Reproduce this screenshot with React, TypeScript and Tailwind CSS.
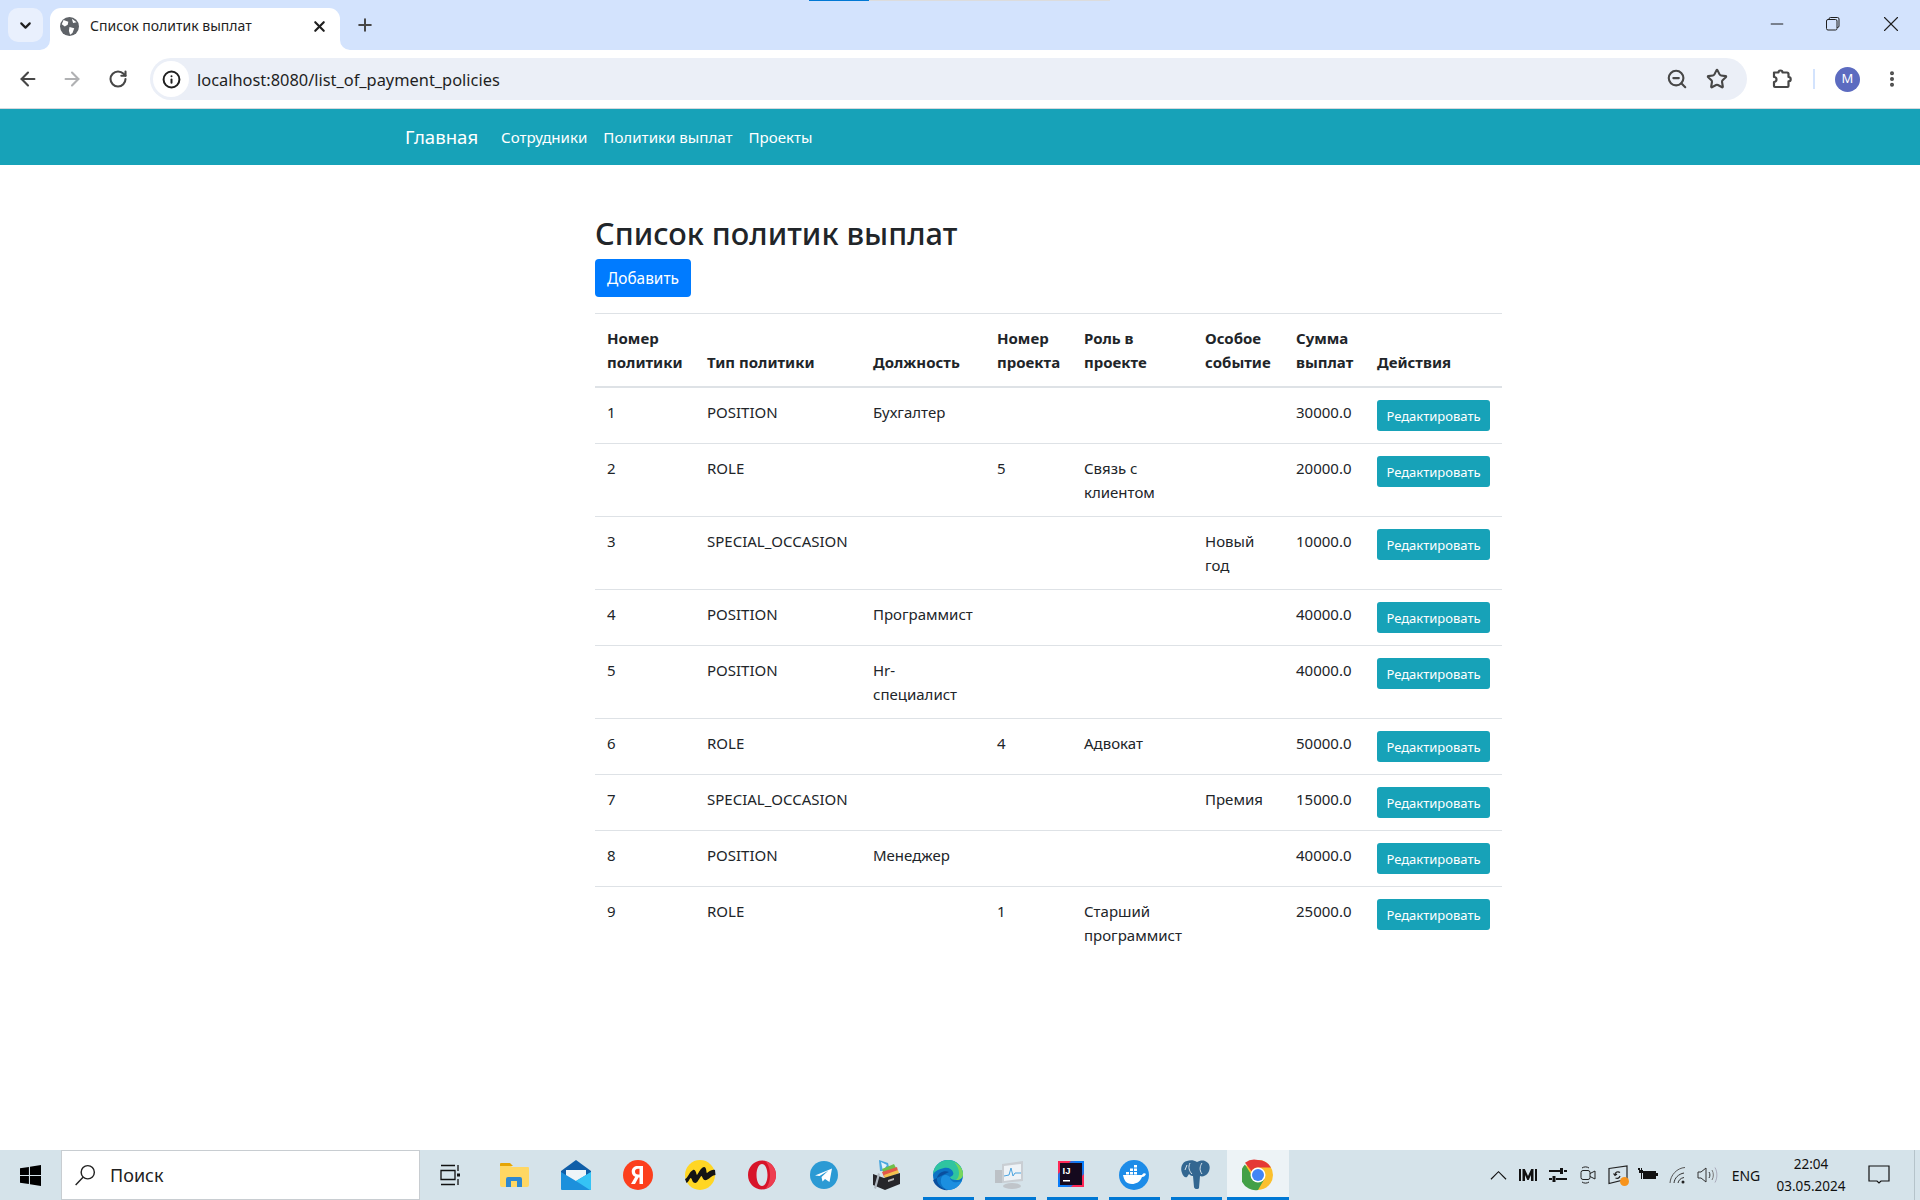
import React from 'react';
import { ArrowLeft, ArrowRight, RotateCw, X, Plus, ChevronDown, Info, ZoomOut, Star, EllipsisVertical, Minus } from 'lucide-react';

const policies = [
  { id: 1, type: 'POSITION', position: 'Бухгалтер', project: '', role: '', occasion: '', sum: '30000.0' },
  { id: 2, type: 'ROLE', position: '', project: '5', role: 'Связь с клиентом', occasion: '', sum: '20000.0' },
  { id: 3, type: 'SPECIAL_OCCASION', position: '', project: '', role: '', occasion: 'Новый год', sum: '10000.0' },
  { id: 4, type: 'POSITION', position: 'Программист', project: '', role: '', occasion: '', sum: '40000.0' },
  { id: 5, type: 'POSITION', position: 'Hr-специалист', project: '', role: '', occasion: '', sum: '40000.0' },
  { id: 6, type: 'ROLE', position: '', project: '4', role: 'Адвокат', occasion: '', sum: '50000.0' },
  { id: 7, type: 'SPECIAL_OCCASION', position: '', project: '', role: '', occasion: 'Премия', sum: '15000.0' },
  { id: 8, type: 'POSITION', position: 'Менеджер', project: '', role: '', occasion: '', sum: '40000.0' },
  { id: 9, type: 'ROLE', position: '', project: '1', role: 'Старший программист', occasion: '', sum: '25000.0' },
];

const headers = ['Номер политики', 'Тип политики', 'Должность', 'Номер проекта', 'Роль в проекте', 'Особое событие', 'Сумма выплат', 'Действия'];

function TabStrip() {
  return (
    <div className="relative flex h-[50px] shrink-0 bg-[#d3e3fd]">
      <div className="absolute left-[809px] top-0 h-px w-[60px] bg-[#0078d4]" />
      <div className="absolute left-[869px] top-0 h-px w-[241px] bg-[#dcdcdc]" />
      <div className="ml-2 mt-2 flex h-[34px] w-[35px] items-center justify-center rounded-[10px] bg-[#e9f0fd]">
        <ChevronDown className="h-[17px] w-[17px] text-[#1f1f1f]" strokeWidth={3} />
      </div>
      <div className="relative ml-[7px] mt-2 flex h-[42px] w-[290px] items-center rounded-t-[11px] bg-white pb-[6px] pl-[10px] pr-[12px]">
        <svg viewBox="0 0 10 10" className="absolute bottom-0 left-[-10px] h-[10px] w-[10px]"><path d="M10 0v10H0a10 10 0 0 0 10-10z" fill="#fff" /></svg>
        <svg viewBox="0 0 10 10" className="absolute bottom-0 right-[-10px] h-[10px] w-[10px]"><path d="M0 0v10h10A10 10 0 0 1 0 0z" fill="#fff" /></svg>
        <svg viewBox="0 0 16 16" className="h-[19px] w-[19px] shrink-0">
          <circle cx="8" cy="8" r="8" fill="#5f6368" />
          <path d="M3 2.500 L7 4 L6.500 6.500 L4 8 L1.500 6 Z M8 8.500 L12 9.500 L10.500 13.500 L8.500 15 L7.500 11.500 Z M10 1.500 L14 4.500 L11 5 Z" fill="#fff" />
        </svg>
        <span className="ml-[11px] flex-1 text-[14px] leading-none text-[#1f1f1f]">Список политик выплат</span>
        <X className="h-[17px] w-[17px] text-[#1f1f1f]" strokeWidth={3} />
      </div>
      <div className="ml-[15px] mt-[15px] h-5 w-5 text-[#474747]">
        <Plus className="h-5 w-5" strokeWidth={2.4} />
      </div>
      <div className="flex-1" />
      <div className="flex text-[#1f1f1f]">
        <div className="flex w-[56px] items-start justify-center pt-[14px]"><Minus className="h-[20px] w-[20px]" strokeWidth={1.2} /></div>
        <div className="flex w-[56px] items-start justify-center pt-[17px]">
          <svg viewBox="0 0 14 14" className="h-[14px] w-[14px]" fill="none" stroke="#1f1f1f" strokeWidth="1">
            <rect x="0.500" y="2.500" width="10.500" height="10.500" rx="1.500" />
            <path d="M3 2.500V2a1.500 1.500 0 0 1 1.500-1.500h7A1.500 1.500 0 0 1 13 2v7a1.500 1.500 0 0 1-1.500 1.500H11" />
          </svg>
        </div>
        <div className="flex w-[59px] items-start justify-center pt-[11px]"><X className="h-[26px] w-[26px]" strokeWidth={1} /></div>
      </div>
    </div>
  );
}

function Toolbar() {
  return (
    <div className="flex h-[59px] shrink-0 items-start rounded-t-[11px] border-b border-[#d5d8dd] bg-white pt-2 text-[#474747]">
      <div className="flex w-[150px] items-center pl-[17px] pt-[10px]">
        <ArrowLeft className="h-[22px] w-[22px]" strokeWidth={2.3} />
        <ArrowRight className="ml-[22px] h-[22px] w-[22px] text-[#b0b1b3]" strokeWidth={2.3} />
        <RotateCw className="ml-[25px] h-[20px] w-[20px]" strokeWidth={2.5} />
      </div>
      <div className="flex h-[42px] w-[1597px] items-center rounded-full bg-[#ebeff7] pl-[3px] pr-[19px]">
        <div className="flex h-[36px] w-[36px] items-center justify-center rounded-full bg-white">
          <Info className="h-[19px] w-[19px] text-[#1f1f1f]" strokeWidth={2.5} />
        </div>
        <span className="ml-[8px] flex-1 pt-[2px] text-[16.4px] leading-none text-[#1f1f1f]">localhost:8080/list_of_payment_policies</span>
        <ZoomOut className="h-[22px] w-[22px]" strokeWidth={2.3} />
        <Star className="ml-[18px] h-[22px] w-[22px]" strokeWidth={2.3} />
      </div>
      <div className="flex h-[42px] flex-1 items-center">
        <svg viewBox="0 0 20 20" className="ml-[25px] h-[20px] w-[20px]" fill="none" stroke="#474747" strokeWidth="2.200" strokeLinejoin="round">
          <path d="M2 3.500h4.500a2 2 0 0 1 4 0H15a1.500 1.500 0 0 1 1.500 1.500v3a2.200 2.200 0 0 1 0 4.400V17a1 1 0 0 1-1 1H3a1 1 0 0 1-1-1v-4a2.500 2.500 0 0 0 0-5z" />
        </svg>
        <div className="ml-[21px] h-[20px] w-[2px] bg-[#d3e3fd]" />
        <div className="ml-[20px] flex h-[25px] w-[25px] items-center justify-center rounded-full bg-[#5c6bc0] text-[13px] text-white">M</div>
        <EllipsisVertical className="ml-[22px] h-[20px] w-[20px]" strokeWidth={2.8} />
      </div>
    </div>
  );
}

function Navbar() {
  return (
    <nav className="flex h-[56px] shrink-0 items-center bg-[#17a2b8] pl-[405px] text-white">
      <a className="w-[72px] text-[18.6px]">Главная</a>
      <div className="ml-[24px] flex gap-4 text-[15.1px]">
        <a>Сотрудники</a>
        <a>Политики выплат</a>
        <a>Проекты</a>
      </div>
    </nav>
  );
}

function PolicyTable() {
  return (
    <table className="w-[907px] table-fixed border-collapse text-[15px] leading-6 text-[#212529]">
      <colgroup>
        <col className="w-[100px]" />
        <col className="w-[166px]" />
        <col className="w-[124px]" />
        <col className="w-[87px]" />
        <col className="w-[121px]" />
        <col className="w-[91px]" />
        <col className="w-[81px]" />
        <col className="w-[137px]" />
      </colgroup>
      <thead>
        <tr>
          {headers.map((h) => (
            <th key={h} className="border-y-2 border-t border-b-[#dee2e6] border-t-[#dee2e6] p-3 text-left align-bottom font-bold">{h}</th>
          ))}
        </tr>
      </thead>
      <tbody>
        {policies.map((p) => (
          <tr key={p.id} className="border-b border-[#dee2e6] last:border-b-0">
            <td className="p-3 align-top">{p.id}</td>
            <td className="p-3 align-top">{p.type}</td>
            <td className="p-3 align-top">{p.position}</td>
            <td className="p-3 align-top">{p.project}</td>
            <td className="p-3 align-top">{p.role}</td>
            <td className="p-3 align-top">{p.occasion}</td>
            <td className="p-3 align-top">{p.sum}</td>
            <td className="p-3 align-top">
              <button className="flex h-[31px] w-[113px] items-center justify-center rounded-[3px] bg-[#17a2b8] pt-px text-[13px] leading-none text-white">Редактировать</button>
            </td>
          </tr>
        ))}
      </tbody>
    </table>
  );
}

function AppIcon({ children }: { children: React.ReactNode }) {
  return <svg viewBox="0 0 32 32" className="h-[32px] w-[32px]">{children}</svg>;
}

const taskApps: { key: string; open?: boolean; active?: boolean; icon: React.ReactNode }[] = [
  { key: 'files', icon: (
    <AppIcon>
      <path d="M3 6h9l2 2h16a1 1 0 0 1 1 1v17a2 2 0 0 1-2 2H4a2 2 0 0 1-2-2V7z" fill="#ffd763" />
      <path d="M2 5a1 1 0 0 1 1-1h9l3 3H2z" fill="#e5a505" />
      <path d="M8 28v-8a2 2 0 0 1 2-2h12a2 2 0 0 1 2 2v8h-5v-6h-6v6z" fill="#2f88d0" />
    </AppIcon>
  ) },
  { key: 'mail', icon: (
    <AppIcon>
      <path d="M1 12 16 1l15 11v4H1z" fill="#0f5ea8" />
      <path d="M6 11h20v6l-10 6-10-6z" fill="#eef4f8" />
      <path d="M1 13l15 9 15-9v17a1 1 0 0 1-1 1H2a1 1 0 0 1-1-1z" fill="#1c90dc" />
      <path d="M31 13v17a1 1 0 0 1-1 1L16 22z" fill="#35c3f5" />
    </AppIcon>
  ) },
  { key: 'ya', icon: (
    <AppIcon>
      <circle cx="16" cy="16" r="15" fill="#fc3f1d" />
      <path d="M17.500 7h3.500v18h-3.500v-6.500h-1L13 25H9l4.200-7.200c-2.200-.9-3.500-2.700-3.500-5.300C9.700 9 12.400 7 15.700 7zm0 2.800h-1.500c-1.800 0-3 1-3 2.800s1.200 3 3 3h1.500z" fill="#fff" />
    </AppIcon>
  ) },
  { key: 'music', icon: (
    <AppIcon>
      <circle cx="16" cy="16" r="15" fill="#ffd624" />
      <path d="M1 20c3-1 4-7 8-9 3-1 3 4 4 5 2-2 3-7 7-8 3 0 2 6 3 6 2-1 4-4 8-3l.500 5c-3 0-5 3-9 5-4 1-4-4-5-4-2 1-3 6-6 7-4 0-3-5-5-5-1 1-2 4-4 5z" fill="#141414" />
    </AppIcon>
  ) },
  { key: 'opera', icon: (
    <AppIcon>
      <path fillRule="evenodd" d="M16 1.500c8 0 14 6.500 14 14.500s-6 14.500-14 14.500S2 24 2 16 8 1.500 16 1.500zM16 5c-3 0-5.500 4.500-5.500 11S13 27 16 27s5.500-4.500 5.500-11S19 5 16 5z" fill="#d7152a" />
      <path d="M19 2c6 1.500 11 7 11 14s-5 12.500-11 14c3-2 5-8 5-14s-2-12-5-14z" fill="#ee3d50" />
    </AppIcon>
  ) },
  { key: 'telegram', icon: (
    <AppIcon>
      <circle cx="16" cy="16" r="14" fill="#2b9ad4" />
      <path d="M7 16.500 24 9.500 21.500 23l-4.500-3-2.500 2.500-1-4.500 7-6.500-9 5.500z" fill="#fff" />
    </AppIcon>
  ) },
  { key: 'archive', icon: (
    <AppIcon>
      <path d="M9 1l9 3 2 8H10z" fill="#4aa8e0" />
      <path d="M11 3l6 3-4 6z" fill="#e6f2fa" />
      <path d="M12 10l12-5 2 4-12 6z" fill="#6fbf4a" />
      <path d="M12 13l15-5 1 4-14 6z" fill="#e4574a" />
      <path d="M14 16l14-5 1 3-14 6z" fill="#f2c14e" />
      <path d="M3 15l11 4 16-5v11l-15 6-12-5z" fill="#26262a" />
      <path d="M18 21l6-2v2l-6 2z" fill="#b5b5b5" />
      <path d="M8 14l2 1-4 15-2-1z" fill="#b0b8c0" />
    </AppIcon>
  ) },
  { key: 'edge', open: true, icon: (
    <AppIcon>
      <circle cx="16" cy="16" r="15" fill="#0c73c4" />
      <path d="M1 15C2 6 9 1 16 1c8 0 15 6 15 14 0 4-3 6-7 6-3 0-6-1-6-3 3-1 4-3 3-5-1-3-5-5-9-4-5 1-9 3-11 6z" fill="#2fc4a0" />
      <path d="M22 3c5 2 9 7 9 12 0 4-3 6-7 6 2-2 3-4 3-7 0-4-2-8-5-11z" fill="#79d65c" />
      <path d="M17 13c-5-2-11 1-12 6-1 5 4 11 12 12-8 1-14-4-16-10z" fill="#0a4f9e" />
      <path d="M18 18c0 4 4 6 8 5 2 0 4-1 4-2-2 6-8 10-13 10-5-1-9-5-8-10 0-4 4-7 9-3z" fill="#1b8fe0" />
    </AppIcon>
  ) },
  { key: 'monitor', open: true, icon: (
    <AppIcon>
      <path d="M8 5l21-3v20l-21 2z" fill="#c9ced3" />
      <path d="M10 7l17-2v15l-17 2z" fill="#eef3f7" />
      <path d="M10 17l5-1 2-7 2 8 2-3 6 0" fill="none" stroke="#4aa3df" strokeWidth="1" />
      <path d="M1 11h7v13H1z" fill="#bcc1c6" />
      <ellipse cx="18" cy="27" rx="9" ry="3" fill="#c0c5ca" />
    </AppIcon>
  ) },
  { key: 'idea', open: true, icon: (
    <AppIcon>
      <rect x="2" y="2" width="26" height="26" fill="#2a6fe0" />
      <path d="M2 2h13L2 15zM28 28H15l13-13z" fill="#fe2857" />
      <path d="M18 2h10v10zM2 28V18l10 10z" fill="#087cfa" />
      <rect x="4" y="4" width="22" height="22" fill="#15091e" />
      <text x="6.500" y="14.500" fill="#fff" fontSize="9.500" fontWeight="700" fontFamily="'Liberation Sans', sans-serif">IJ</text>
      <rect x="7" y="21" width="7" height="1.500" fill="#fff" />
    </AppIcon>
  ) },
  { key: 'docker', open: true, icon: (
    <AppIcon>
      <circle cx="16" cy="16" r="15" fill="#1d8ce8" />
      <path d="M5 16h19c1-2 3-2 4-1-1 2-2 3-4 3-2 5-6 7-10 7-6 0-8-4-9-9z" fill="#fff" />
      <path d="M8 13h3v2.500H8zM12 13h3v2.500h-3zM16 13h3v2.500h-3zM12 9.500h3V12h-3zM16 9.500h3V12h-3zM16 6h3v2.500h-3z" fill="#fff" />
    </AppIcon>
  ) },
  { key: 'pg', open: true, icon: (
    <AppIcon>
      <path d="M7 2C2 3 0 9 2 14c1 3 3 5 5 4l2-3c2 2 3 2 4 2l1 11c0 2 4 3 5 1l1-12c2 1 6 0 8-3 3-5 2-10-3-12-3-1-6 0-8 1-3-2-7-2-10-1z" fill="#336791" />
      <path d="M10 4c-2 4-1 8 2 11M22 4c-2 3-3 7 0 11M7 6l-2 5" fill="none" stroke="#d8e4ec" strokeWidth="1" />
    </AppIcon>
  ) },
  { key: 'chrome', open: true, active: true, icon: (
    <AppIcon>
      <circle cx="16" cy="16" r="15" fill="#fbc02d" />
      <path d="M16 1a15 15 0 0 1 13 7.500H16a7.500 7.500 0 0 0-6.500 3.750L3 3.800A15 15 0 0 1 16 1z" fill="#e53935" />
      <path d="M3 5.500A15 15 0 0 0 16 31l6.500-11.250a7.500 7.500 0 0 1-13-3.750z" fill="#43a047" />
      <circle cx="16" cy="16" r="7.500" fill="#fff" />
      <circle cx="16" cy="16" r="6" fill="#4285f4" />
    </AppIcon>
  ) },
];

const trayIcons: { key: string; icon: React.ReactNode }[] = [
  { key: 'up', icon: (
    <svg viewBox="0 0 18 10" className="h-[10px] w-[17px]" fill="none" stroke="#111" strokeWidth="1.200"><path d="M1 9.500 9 1.500l8 8" /></svg>
  ) },
  { key: 'miro', icon: (
    <svg viewBox="0 0 18 14" className="h-[14px] w-[18px]" fill="#111"><path d="M0 1h2v12H0zM3.500 1h2.300L9 8l3.200-7h2.300v12h-2.500V7l-2.300 5H8.300L6 7v6H3.500zM16 1h2v12h-2z" /></svg>
  ) },
  { key: 'sliders', icon: (
    <svg viewBox="0 0 18 16" className="h-[16px] w-[18px]" fill="#111"><path d="M0 3h11v2H0zM15 3h3v2h-3zM11 1h3v6h-3zM0 11h3v2H0zM7 11h11v2H7zM3.500 9h3v6h-3z" /></svg>
  ) },
  { key: 'video', icon: (
    <svg viewBox="0 0 16 20" className="h-[20px] w-[16px]" fill="none" stroke="#222" strokeWidth="1"><rect x="1" y="5.500" width="9" height="9" rx="2" /><path d="M10 8.500l5-2.500v8l-5-2.500M2 3c2-1.500 5-1.500 7 0M2 17c2 1.500 5 1.500 7 0" /></svg>
  ) },
  { key: 'store', icon: (
    <div className="relative h-[20px] w-[20px]">
      <svg viewBox="0 0 20 20" className="h-[20px] w-[20px]" fill="none" stroke="#222" strokeWidth="1.200"><path d="M1 3.500 19 1v13l-18 4.500z" /><path d="M12 7.500c-2-1.500-5-.5-5 2.500M5.500 8.500 7 10.500l2-1.500M7.500 13c2 1 4 0 4.500-2" /></svg>
      <div className="absolute bottom-[-1px] right-[-1px] h-[9px] w-[9px] rounded-full bg-[#f7941d]" />
    </div>
  ) },
  { key: 'battery', icon: (
    <svg viewBox="0 0 20 14" className="h-[14px] w-[20px]" fill="#111"><path d="M1 0h1v2h1V0h1v2h1v3H4v6H3V5H1V2H0V0z" /><path d="M5 3h13v2h2v3h-2v3H5zM6 4v6h11V4z" fillRule="evenodd" /><rect x="6" y="4" width="11" height="6" /></svg>
  ) },
  { key: 'wifi', icon: (
    <svg viewBox="0 0 18 18" className="h-[18px] w-[18px]" fill="none"><path d="M1 17C1.500 9 8 2 16 1.500" stroke="#555" strokeWidth="1" /><path d="M5 17c.5-5 4.500-9 10-10M9 17c.5-2.500 2.500-5 6-5.500" stroke="#333" strokeWidth="1" /><circle cx="14" cy="16" r="1.500" fill="#222" /></svg>
  ) },
  { key: 'sound', icon: (
    <svg viewBox="0 0 22 18" className="h-[18px] w-[22px]" fill="none" stroke="#333" strokeWidth="1"><path d="M1 6h3l5-4v14l-5-4H1z" /><path d="M12 6c1.200 1.800 1.200 4.200 0 6" /><path d="M15 4c1.800 3 1.800 7 0 10" stroke="#777" /><path d="M18 1.500c2.500 4.500 2.500 10.500 0 15" stroke="#aab" /></svg>
  ) },
];

function Taskbar() {
  return (
    <div className="flex h-[50px] shrink-0 items-stretch bg-[#d5e3ea] text-[#111]">
      <div className="flex w-[61px] items-center justify-center">
        <svg viewBox="0 0 20 20" className="h-[21px] w-[21px]" fill="#000">
          <path d="M0 3l8.500-1.200V9.500H0zM9.500 1.700 20 0v9.500H9.500zM0 10.500h8.500v7.700L0 17zM9.500 10.500H20V20l-10.500-1.700z" />
        </svg>
      </div>
      <div className="flex w-[359px] items-center border border-[#c8cdd1] bg-white pl-[12px]">
        <svg viewBox="0 0 20 20" className="h-[22px] w-[22px]" fill="none" stroke="#222" strokeWidth="1.300">
          <circle cx="12.500" cy="7.500" r="6" />
          <path d="M8.200 12 1.500 19" />
        </svg>
        <span className="ml-[14px] text-[18px] leading-none text-[#222]">Поиск</span>
      </div>
      <div className="flex w-[63px] items-center justify-center pr-[2px]">
        <svg viewBox="0 0 22 22" className="h-[22px] w-[22px]" fill="none" stroke="#111" strokeWidth="1.300">
          <path d="M1 1.500h14M1 20.500h14M1 6.500h14v9H1zM18 1v6M18 15v6" />
          <rect x="17" y="9.500" width="3" height="3" fill="#111" stroke="none" />
        </svg>
      </div>
      {taskApps.map((app) => (
        <div key={app.key} className={`relative flex w-[62px] items-center justify-center ${app.active ? 'bg-[#edf3f6]' : ''}`}>
          {app.icon}
          {app.open && <div className={`absolute bottom-0 h-[3px] bg-[#0078d4] ${app.active ? 'inset-x-0' : 'left-[6px] w-[51px]'}`} />}
        </div>
      ))}
      <div className="flex-1" />
      {trayIcons.map((t) => (
        <div key={t.key} className="flex w-[30px] items-center justify-center">{t.icon}</div>
      ))}
      <div className="flex w-[46px] items-center justify-center text-[14px]">ENG</div>
      <div className="flex w-[84px] flex-col items-center justify-center text-[13.5px] leading-[22px]">
        <span>22:04</span>
        <span>03.05.2024</span>
      </div>
      <div className="flex w-[52px] items-center justify-center">
        <svg viewBox="0 0 22 20" className="h-[20px] w-[22px]" fill="none" stroke="#111" strokeWidth="1.200"><path d="M1 1h20v15h-8l-2 2-2-2H1z" /></svg>
      </div>
      <div className="w-[9px]" />
      <div className="w-px bg-[#b5c3ca]" />
      <div className="w-[5px]" />
    </div>
  );
}

export default function App() {
  return (
    <div className="flex h-[1200px] w-[1920px] flex-col overflow-hidden bg-white font-['Noto_Sans','Open_Sans',sans-serif]">
      <TabStrip />
      <Toolbar />
      <Navbar />
      <main className="flex-1 pl-[595px] pt-[50px]">
        <h2 className="text-[30.7px] font-medium leading-[37px] text-[#212529]">Список политик выплат</h2>
        <button className="mt-[7px] flex h-[38px] w-[96px] items-center justify-center rounded bg-[#007bff] pt-px text-[15.4px] text-white">Добавить</button>
        <div className="mt-4">
          <PolicyTable />
        </div>
      </main>
      <Taskbar />
    </div>
  );
}
